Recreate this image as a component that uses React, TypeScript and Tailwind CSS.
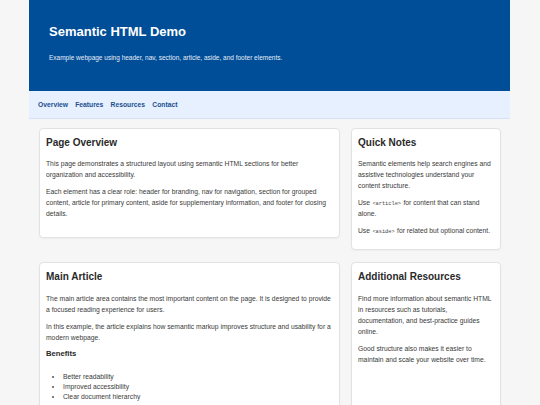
import React from "react";

const font = { fontFamily: '"Liberation Sans", Arial, sans-serif' };

function Card({ title, children, className = "" }: { title: string; children: React.ReactNode; className?: string }) {
  return (
    <div className={`bg-white border border-[#e2e2e2] rounded-[4px] shadow-[0_1px_2px_rgba(0,0,0,0.04)] px-[6px] pt-[8px] ${className}`}>
      <h2 className="text-[10px] leading-[12px] font-bold text-[#2a2a2a] mb-[9.5px]">{title}</h2>
      {children}
    </div>
  );
}

function P({ children }: { children: React.ReactNode }) {
  return <p className="text-[6.75px] leading-[11px] text-[#3a3a3a] mb-[6px] last:mb-0">{children}</p>;
}

function Code({ children }: { children: React.ReactNode }) {
  return (
    <code
      className="text-[5.3px] leading-none text-[#444] mx-[0.5px]"
      style={{ fontFamily: '"Liberation Mono", "DejaVu Sans Mono", monospace' }}
    >
      {children}
    </code>
  );
}

export default function App() {
  return (
    <div className="min-h-[405px] bg-[#f6f6f6]" style={font}>
      <div className="w-[481px] ml-[29px]">
        <header className="bg-[#004e98] px-[20px] pt-[24px] pb-[27.7px]">
          <h1 className="text-[13px] leading-[16px] font-bold text-white">Semantic HTML Demo</h1>
          <p className="mt-[13px] text-[6.5px] leading-[10px] text-[#e6edf7]">
            Example webpage using header, nav, section, article, aside, and footer elements.
          </p>
        </header>
        <nav className="bg-[#e6f0ff] border-b border-[#d7e3f5] pl-[9px] pt-[9.5px] pb-[7.5px] flex gap-[7.2px]">
          {["Overview", "Features", "Resources", "Contact"].map((l) => (
            <a key={l} className="text-[6.75px] leading-[10px] font-bold text-[#1c4f8f]">{l}</a>
          ))}
        </nav>
        <main className="flex gap-[11px] pl-[10px] pt-[9px]">
          <div className="w-[301px] flex flex-col gap-[24px]">
            <Card title="Page Overview" className="pb-[18px]">
              <P>This page demonstrates a structured layout using semantic HTML sections for better organization and accessibility.</P>
              <P>Each element has a clear role: header for branding, nav for navigation, section for grouped content, article for primary content, aside for supplementary information, and footer for closing details.</P>
            </Card>
            <Card title="Main Article" className="pb-[20px]">
              <P>The main article area contains the most important content on the page. It is designed to provide a focused reading experience for users.</P>
              <P>In this example, the article explains how semantic markup improves structure and usability for a modern webpage.</P>
              <h3 className="text-[7.7px] leading-[9.5px] font-bold text-[#2a2a2a] mt-[6.3px] mb-[13.8px]">Benefits</h3>
              <ul className="list-disc pl-[17px] text-[6.75px] leading-[10px] text-[#3a3a3a] marker:text-[#555]">
                <li>Better readability</li>
                <li>Improved accessibility</li>
                <li>Clear document hierarchy</li>
              </ul>
            </Card>
          </div>
          <div className="w-[150px] flex flex-col gap-[12px]">
            <Card title="Quick Notes" className="pb-[13px]">
              <P>Semantic elements help search engines and assistive technologies understand your content structure.</P>
              <P>Use <Code>&lt;article&gt;</Code> for content that can stand alone.</P>
              <P>Use <Code>&lt;aside&gt;</Code> for related but optional content.</P>
            </Card>
            <Card title="Additional Resources" className="pb-[60px]">
              <P>Find more information about semantic HTML in resources such as tutorials, documentation, and best-practice guides online.</P>
              <P>Good structure also makes it easier to maintain and scale your website over time.</P>
            </Card>
          </div>
        </main>
      </div>
    </div>
  );
}
